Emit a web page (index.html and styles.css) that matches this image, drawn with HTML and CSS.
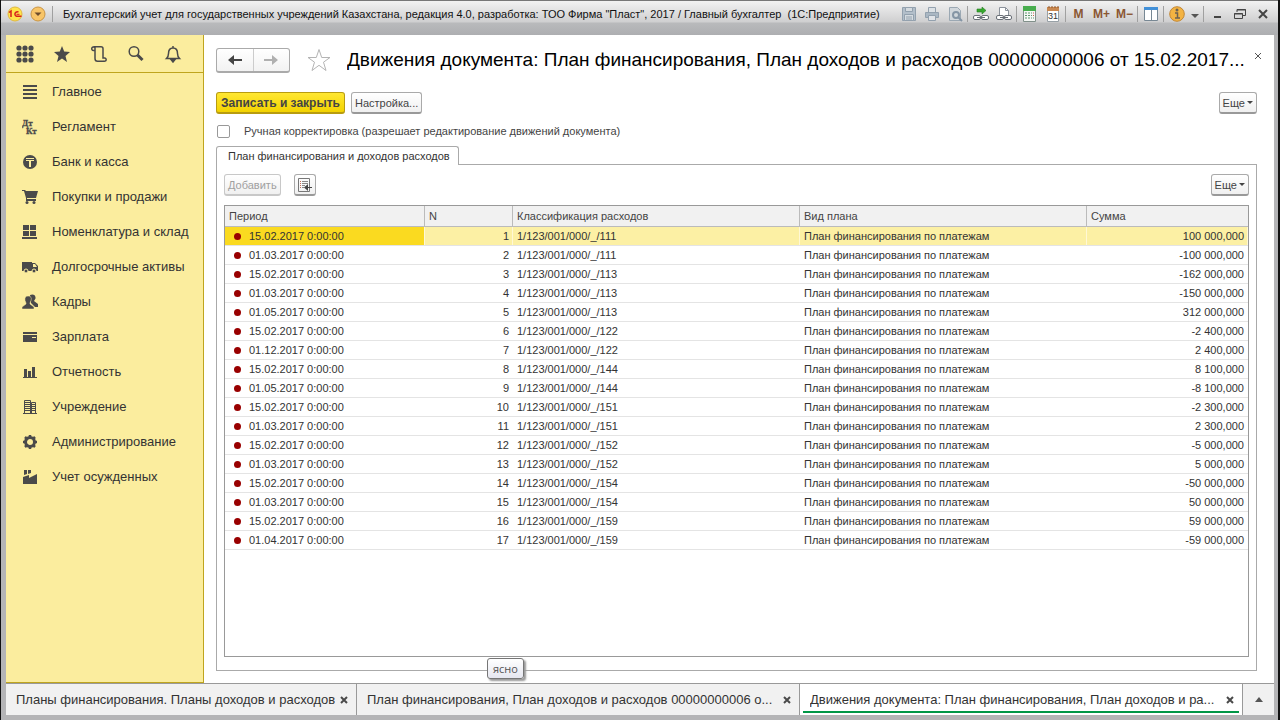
FILE: index.html
```html
<!DOCTYPE html>
<html lang="ru">

<head>
    <meta charset="UTF-8">
    <meta name="viewport" content="width=device-width, initial-scale=1.0">
    <title>Движения документа</title>
    <link rel="stylesheet" href="styles.css">
</head>

<body>
    <header class="titlebar">
        <svg class="logo" width="16" height="16" viewBox="0 0 16 16">
            <circle cx="8" cy="8" r="7" fill="#ffe34a" stroke="#e0b840"/>
            <path d="M2 6.500l2-1.500v6M11.500 6.200A2.300 2.300 0 1 0 9.500 10.300h5" fill="none" stroke="#d8201c" stroke-width="1.500"/>
            <path d="M9.500 8.300h3" stroke="#d8201c"/>
        </svg>
        <button class="menu-button" aria-label="Меню">
            <svg width="16" height="16" viewBox="0 0 16 16">
                <circle cx="8" cy="8" r="7" fill="#f8c568" stroke="#c99545"/>
                <path d="M4.500 6.500h7L8 10z" fill="#6d4c2c"/>
            </svg>
        </button>
        <span class="separator"></span>
        <h1>Бухгалтерский учет для государственных учреждений Казахстана, редакция 4.0, разработка: ТОО Фирма "Пласт", 2017 / Главный бухгалтер &nbsp;(1С:Предприятие)</h1>
        <div class="tools">
            <button disabled aria-label="Сохранить">
                <svg width="16" height="16" viewBox="0 0 16 16" fill="none" stroke="#93a1ae"><path d="M1.500 1.500h13v13h-13z" fill="#b3bfca"/><path d="M4.500 1.500h7v4h-7zM3.500 8.500h9v6h-9z" fill="#d5dbe0"/><path d="M5 11h6M5 13h6"/></svg>
            </button>
            <button disabled aria-label="Печать">
                <svg width="16" height="16" viewBox="0 0 16 16" fill="none" stroke="#93a1ae"><path d="M4.500 6V1.500h7V6" fill="#dce1e5"/><path d="M1.500 6.500h13v5h-13z" fill="#aab7c3"/><path d="M4.500 9.500h7v5h-7z" fill="#e1e4e8"/></svg>
            </button>
            <button disabled aria-label="Просмотр">
                <svg width="16" height="16" viewBox="0 0 16 16" fill="none" stroke="#9ba8b3"><path d="M2.500 1.500h8l3 3v10h-11z" fill="#d1d7dc"/><circle cx="9" cy="9" r="3" stroke="#8495a5" stroke-width="2"/><path d="M11 11l4 4" stroke="#8495a5" stroke-width="2"/></svg>
            </button>
            <span class="separator"></span>
            <button aria-label="Перейти по ссылке">
                <svg width="18" height="16" viewBox="0 0 18 16" fill="none"><path d="M5 3h5V1l4 3.500L10 8V6H5z" fill="#36a72e" stroke="#268021" stroke-width=".6"/><rect x="1.500" y="9.500" width="7" height="4" rx="1.500" fill="#fff" stroke="#686e76"/><rect x="9.500" y="9.500" width="7" height="4" rx="1.500" fill="#fff" stroke="#686e76"/><path d="M5 11.500h8" stroke="#686e76"/></svg>
            </button>
            <button aria-label="Получить ссылку">
                <svg width="18" height="16" viewBox="0 0 18 16" fill="none"><path d="M4.500 9V1.500h6l3 3V9" fill="#fff" stroke="#8c939c"/><path d="M10.500 1.500v3h3" stroke="#8c939c"/><rect x="1.500" y="9.500" width="7" height="4" rx="1.500" fill="#fff" stroke="#686e76"/><rect x="9.500" y="9.500" width="7" height="4" rx="1.500" fill="#fff" stroke="#686e76"/><path d="M5 11.500h8" stroke="#686e76"/></svg>
            </button>
            <span class="separator"></span>
            <button aria-label="Калькулятор">
                <svg width="16" height="16" viewBox="0 0 16 16"><path d="M1.500.500h12v15h-12z" fill="#f5f8f5" stroke="#81908a"/><path d="M1 0h13v5H1z" fill="#48ad4e"/><path d="M3 7h7M3 9.500h7M3 12h7" stroke="#5f9670" stroke-dasharray="2 1"/><path d="M11 7h1M11 9.500h1" stroke="#d45d4d"/><path d="M11 12h1" stroke="#5f9670"/></svg>
            </button>
            <button aria-label="Календарь">
                <svg width="16" height="16" viewBox="0 0 16 16"><path d="M2.500 2.500h11v13h-11z" fill="#fff" stroke="#98a1a7"/><path d="M2 1h12v4H2z" fill="#c98850"/><path d="M4 0v2M7 0v2M10 0v2M13 0v2" stroke="#8e562a"/><text x="8" y="13" text-anchor="middle" font-family="Liberation Sans" font-size="9" fill="#333">31</text></svg>
            </button>
            <span class="separator"></span>
            <button class="memory">M</button>
            <button class="memory">M+</button>
            <button class="memory">M−</button>
            <span class="separator"></span>
            <button aria-label="Панели">
                <svg width="16" height="16" viewBox="0 0 16 16"><path d="M1.500 1.500h13v13h-13z" fill="#fff" stroke="#788894"/><path d="M1 1h14v3H1z" fill="#4290d8"/><path d="M8.500 4v10" stroke="#788894"/></svg>
            </button>
            <span class="separator"></span>
            <button aria-label="Справка">
                <svg width="16" height="16" viewBox="0 0 16 16"><circle cx="8" cy="8" r="7.300" fill="#f3b342" stroke="#c28735"/><circle cx="8" cy="4" r="1.500" fill="#6d6251"/><path d="M6 7h2.500v5M6 12h5" stroke="#6d6251" stroke-width="1.500" fill="none"/></svg>
            </button>
            <button class="narrow" aria-label="Еще">
                <svg width="8" height="8" viewBox="0 0 8 8"><path d="M0 4h8L4 8z" fill="#555"/></svg>
            </button>
            <span class="separator"></span>
            <button aria-label="Свернуть">
                <svg width="14" height="14" viewBox="0 0 14 14"><path d="M4 10h7" stroke="#444" stroke-width="2"/></svg>
            </button>
            <button aria-label="Развернуть">
                <svg width="14" height="14" viewBox="0 0 14 14" fill="none" stroke="#444"><path d="M4 5V2.500h8.500v6H10M4 3h9M1.500 6.500h8v5h-8zM1 7h9"/></svg>
            </button>
            <button aria-label="Закрыть">
                <svg width="14" height="14" viewBox="0 0 14 14"><path d="M3 3l8 8M11 3l-8 8" stroke="#444" stroke-width="2"/></svg>
            </button>
        </div>
    </header>

    <div class="workspace">
        <aside class="sidebar">
            <div class="quick">
                <button aria-label="Все функции">
                    <svg width="18" height="18" viewBox="0 0 18 18" fill="#4a4a4a"><circle cx="3" cy="3" r="2.600"/><circle cx="9" cy="3" r="2.600"/><circle cx="15" cy="3" r="2.600"/><circle cx="3" cy="9" r="2.600"/><circle cx="9" cy="9" r="2.600"/><circle cx="15" cy="9" r="2.600"/><circle cx="3" cy="15" r="2.600"/><circle cx="9" cy="15" r="2.600"/><circle cx="15" cy="15" r="2.600"/></svg>
                </button>
                <button aria-label="Избранное">
                    <svg width="18" height="18" viewBox="0 0 18 18"><path d="M9 1l2.200 5.500 5.800.500-4.500 4 1.500 6L9 13.500 4 17l1.500-6L1 7l5.800-.500z" fill="#4a4a4a"/></svg>
                </button>
                <button aria-label="История">
                    <svg width="18" height="18" viewBox="0 0 18 18" fill="none" stroke="#4a4a4a" stroke-width="1.500"><path d="M5 5.500H3.500a1.800 1.800 0 1 1 1.500-2.800v10.800c0 2 1 2.800 2.500 2.800h7M3.500 1.700H11c1.500 0 2 .800 2 2V13h1.500a1.600 1.600 0 1 1-1 2.800"/></svg>
                </button>
                <button aria-label="Поиск">
                    <svg width="18" height="18" viewBox="0 0 18 18" fill="none" stroke="#4a4a4a"><circle cx="7" cy="6.500" r="4.800" stroke-width="1.500"/><path d="M10.500 10l5 5" stroke-width="3"/></svg>
                </button>
                <button aria-label="Оповещения">
                    <svg width="18" height="18" viewBox="0 0 18 18" fill="none" stroke="#4a4a4a" stroke-width="1.500"><path d="M2.500 13.500c1.500-1.500 2-2.500 2-5C4.500 5 6 3 9 3s4.500 2 4.500 5.500c0 2.500.500 3.500 2 5zM9 3V1"/><path d="M7 14.500h4L9 17z" fill="#4a4a4a"/></svg>
                </button>
            </div>
            <nav class="sections">
                <a href="#"><svg width="16" height="16" viewBox="0 0 16 16"><path d="M1 2h14M1 6h14M1 10h14M1 14h14" stroke="#4a4a4a" stroke-width="2"/></svg>Главное</a>
                <a href="#"><svg width="16" height="16" viewBox="0 0 16 16" fill="#4a4a4a" stroke="#4a4a4a" stroke-width=".3" font-family="Liberation Serif" font-weight="bold" font-size="9"><text x="0" y="7">Дт</text><text x="4" y="15">Кт</text></svg>Регламент</a>
                <a href="#"><svg width="16" height="16" viewBox="0 0 16 16"><circle cx="8" cy="8" r="7" fill="#4a4a4a"/><path d="M4 4.500h8M4 6.500h8" stroke="#fbed9e"/><path d="M8 6v7" stroke="#fbed9e" stroke-width="2"/></svg>Банк и касса</a>
                <a href="#"><svg width="16" height="16" viewBox="0 0 16 16" fill="#4a4a4a"><path d="M0 1h3l1 1h12l-2 7H5v1h9v2H4V9L2 2H0z"/><circle cx="5" cy="13.500" r="1.500"/><circle cx="12" cy="13.500" r="1.500"/></svg>Покупки и продажи</a>
                <a href="#"><svg width="16" height="16" viewBox="0 0 16 16" fill="#4a4a4a"><path d="M1 1h6v5H1zM8 1h6v5H8zM1 7h6v5H1zM8 7h6v5H8zM0 13h15v2H0z"/></svg>Номенклатура и склад</a>
                <a href="#"><svg width="16" height="16" viewBox="0 0 16 16" fill="#4a4a4a"><path d="M0 3h10v9H0zM10 4h3l3 3v5h-6z"/><path d="M11 5h2l2 3h-4z" fill="#fbed9e"/><g stroke="#fbed9e"><circle cx="4" cy="12" r="2"/><circle cx="12" cy="12" r="2"/></g></svg>Долгосрочные активы</a>
                <a href="#"><svg width="16" height="16" viewBox="0 0 16 16" fill="#4a4a4a"><path d="M8 1c3-1.500 6 0 5.500 3.500L12 7l4 3v3h-3L9 9z"/><path d="M6 2c3 0 4 2 3 4.500L8 9v1l4 3v2H0v-2l4-3V9L3 6.500C2.500 4 3.500 2 6 2z" stroke="#fbed9e" stroke-width=".5"/></svg>Кадры</a>
                <a href="#"><svg width="16" height="16" viewBox="0 0 16 16" fill="#4a4a4a"><path d="M1 3h14v2H1zM1 6h14v7H1z"/><path d="M10 8h4v1h-4z" fill="#fbed9e"/></svg>Зарплата</a>
                <a href="#"><svg width="16" height="16" viewBox="0 0 16 16" fill="#4a4a4a"><path d="M1 13h14v1H1zM2 5h3v8H2zM6 7h3v6H6zM10 3h3v10h-3z"/></svg>Отчетность</a>
                <a href="#"><svg width="16" height="16" viewBox="0 0 16 16" fill="none" stroke="#4a4a4a"><path d="M2.500 14V1.500h6V14M9.500 14V3.500h4V14M1 14.500h14M3 3.500h5M3 5.500h5M3 7.500h5M3 9.500h5M3 11.500h5M10 5.500h4M10 7.500h4M10 9.500h4M10 11.500h4"/></svg>Учреждение</a>
                <a href="#"><svg width="16" height="16" viewBox="0 0 16 16" fill="none" stroke="#4a4a4a"><circle cx="8" cy="8" r="4.500" stroke-width="3"/><path d="M8 1v2M8 13v2M1 8h2M13 8h2M3 3l1.500 1.500M11.500 11.500L13 13M3 13l1.500-1.500M11.500 4.500L13 3" stroke-width="2.500"/></svg>Администрирование</a>
                <a href="#"><svg width="16" height="16" viewBox="0 0 16 16" fill="#4a4a4a"><path d="M1 15V8l6-2v3l8-4v10zM2 1h3v4L2 6zM6 1h3v3L6 5z"/></svg>Учет осужденных</a>
            </nav>
        </aside>

        <main class="page">
            <div class="page-head">
                <div class="history">
                    <button aria-label="Назад"><svg width="16" height="12" viewBox="0 0 16 12"><path d="M1 6l6-5v4h8v2H7v4z" fill="#444"/></svg></button>
                    <button aria-label="Вперед"><svg width="16" height="12" viewBox="0 0 16 12"><path d="M15 6L9 1v4H1v2h8v4z" fill="#b0b0b0"/></svg></button>
                </div>
                <button class="favorite" aria-label="В избранное">
                    <svg width="24" height="24" viewBox="0 0 24 24"><path d="M12 1.500l2.700 8H23l-6.500 4.700L19 22.500 12 17.300 5 22.500l2.500-8.300L1 9.500h8.300z" fill="none" stroke="#b4b4b4"/></svg>
                </button>
                <h2>Движения документа: План финансирования, План доходов и расходов 00000000006 от 15.02.2017...</h2>
                <button class="close-page" aria-label="Закрыть"><svg width="8" height="8" viewBox="0 0 8 8"><path d="M1 1l6 6M7 1L1 7" stroke="#555"/></svg></button>
            </div>

            <div class="toolbar">
                <button class="btn primary">Записать и закрыть</button>
                <button class="btn">Настройка...</button>
                <button class="btn more">Еще<span class="caret"></span></button>
            </div>

            <label class="manual"><input type="checkbox">Ручная корректировка (разрешает редактирование движений документа)</label>

            <button class="tab">План финансирования и доходов расходов</button>
            <section class="panel">
                <div class="panel-bar">
                    <button class="btn" disabled>Добавить</button>
                    <button class="btn icon" aria-label="Подбор">
                        <svg width="16" height="16" viewBox="0 0 16 16" fill="none"><path d="M1.500 1.500h11v13h-11z" stroke="#777"/><path d="M3 4.500h1M3 6.500h1M3 8.500h1M3 10.500h1" stroke="#c66a52"/><path d="M5 4.500h6M5 6.500h6M5 8.500h3M5 10.500h2" stroke="#888"/><path d="M15 10.500H8" stroke="#444"/><path d="M11 7v7l-4-3.500z" fill="#444"/></svg>
                    </button>
                    <button class="btn more">Еще<span class="caret"></span></button>
                </div>
                <div class="grid">
                    <table>
                        <colgroup>
                            <col class="col-period">
                            <col class="col-number">
                            <col class="col-class">
                            <col class="col-kind">
                            <col class="col-sum">
                        </colgroup>
                        <thead>
                            <tr><th>Период</th><th>N</th><th>Классификация расходов</th><th>Вид плана</th><th>Сумма</th></tr>
                        </thead>
                        <tbody>
                            <tr class="selected"><td>15.02.2017 0:00:00</td><td>1</td><td>1/123/001/000/_/111</td><td>План финансирования по платежам</td><td>100 000,000</td></tr>
                            <tr><td>01.03.2017 0:00:00</td><td>2</td><td>1/123/001/000/_/111</td><td>План финансирования по платежам</td><td>-100 000,000</td></tr>
                            <tr><td>15.02.2017 0:00:00</td><td>3</td><td>1/123/001/000/_/113</td><td>План финансирования по платежам</td><td>-162 000,000</td></tr>
                            <tr><td>01.03.2017 0:00:00</td><td>4</td><td>1/123/001/000/_/113</td><td>План финансирования по платежам</td><td>-150 000,000</td></tr>
                            <tr><td>01.05.2017 0:00:00</td><td>5</td><td>1/123/001/000/_/113</td><td>План финансирования по платежам</td><td>312 000,000</td></tr>
                            <tr><td>15.02.2017 0:00:00</td><td>6</td><td>1/123/001/000/_/122</td><td>План финансирования по платежам</td><td>-2 400,000</td></tr>
                            <tr><td>01.12.2017 0:00:00</td><td>7</td><td>1/123/001/000/_/122</td><td>План финансирования по платежам</td><td>2 400,000</td></tr>
                            <tr><td>15.02.2017 0:00:00</td><td>8</td><td>1/123/001/000/_/144</td><td>План финансирования по платежам</td><td>8 100,000</td></tr>
                            <tr><td>01.05.2017 0:00:00</td><td>9</td><td>1/123/001/000/_/144</td><td>План финансирования по платежам</td><td>-8 100,000</td></tr>
                            <tr><td>15.02.2017 0:00:00</td><td>10</td><td>1/123/001/000/_/151</td><td>План финансирования по платежам</td><td>-2 300,000</td></tr>
                            <tr><td>01.03.2017 0:00:00</td><td>11</td><td>1/123/001/000/_/151</td><td>План финансирования по платежам</td><td>2 300,000</td></tr>
                            <tr><td>15.02.2017 0:00:00</td><td>12</td><td>1/123/001/000/_/152</td><td>План финансирования по платежам</td><td>-5 000,000</td></tr>
                            <tr><td>01.03.2017 0:00:00</td><td>13</td><td>1/123/001/000/_/152</td><td>План финансирования по платежам</td><td>5 000,000</td></tr>
                            <tr><td>15.02.2017 0:00:00</td><td>14</td><td>1/123/001/000/_/154</td><td>План финансирования по платежам</td><td>-50 000,000</td></tr>
                            <tr><td>01.03.2017 0:00:00</td><td>15</td><td>1/123/001/000/_/154</td><td>План финансирования по платежам</td><td>50 000,000</td></tr>
                            <tr><td>15.02.2017 0:00:00</td><td>16</td><td>1/123/001/000/_/159</td><td>План финансирования по платежам</td><td>59 000,000</td></tr>
                            <tr><td>01.04.2017 0:00:00</td><td>17</td><td>1/123/001/000/_/159</td><td>План финансирования по платежам</td><td>-59 000,000</td></tr>
                        </tbody>
                    </table>
                </div>
            </section>
        </main>
    </div>

    <footer class="windows">
        <div class="window first"><a href="#">Планы финансирования. Планы доходов и расходов</a><button aria-label="Закрыть"><svg width="8" height="8" viewBox="0 0 8 8"><path d="M1 1l6 6M7 1L1 7" stroke="#4a4a4a" stroke-width="2"/></svg></button></div>
        <div class="window"><a href="#">План финансирования, План доходов и расходов 00000000006 о...</a><button aria-label="Закрыть"><svg width="8" height="8" viewBox="0 0 8 8"><path d="M1 1l6 6M7 1L1 7" stroke="#4a4a4a" stroke-width="2"/></svg></button></div>
        <div class="window current"><a href="#">Движения документа: План финансирования, План доходов и ра...</a><button aria-label="Закрыть"><svg width="8" height="8" viewBox="0 0 8 8"><path d="M1 1l6 6M7 1L1 7" stroke="#4a4a4a" stroke-width="2"/></svg></button></div>
        <button class="window-list" aria-label="Список окон"><svg width="10" height="6" viewBox="0 0 10 6"><path d="M1 5h8L5 0z" fill="#555"/></svg></button>
        <div class="tooltip">ясно</div>
    </footer>
</body>

</html>
```
FILE: styles.css
```css
* {
    box-sizing: border-box;
}

body {
    display: flex;
    flex-direction: column;
    min-height: 100vh;
    margin: 0;
    border-left: 1px solid #111;
    border-right: 2px solid #111;
    background-color: #b4b4b6;
    color: #333;
    font-family: "Liberation Sans", Arial, sans-serif;
    font-size: 11px;
}

button {
    padding: 0;
    border: none;
    background: none;
    color: inherit;
    font: inherit;
    white-space: nowrap;
}

a {
    color: inherit;
    text-decoration: none;
}

svg {
    display: block;
    flex: none;
}

/* title bar */
.titlebar {
    display: flex;
    align-items: center;
    height: 35px;
    padding: 0 5px 9px 6px;
    border-top: 1px solid #777;
    background: linear-gradient(#f2f2f2, #cfcfd0 21px, #b9babc 22px, #adaeb1);
}

.menu-button {
    margin-left: 7px;
}

.separator {
    flex: none;
    width: 1px;
    height: 16px;
    background-color: #a0a0a0;
}

.titlebar > .separator {
    margin-left: 6px;
}

h1 {
    flex: 1;
    min-width: 0;
    margin: 0 0 0 10px;
    overflow: hidden;
    color: #111;
    font-size: 11px;
    font-weight: normal;
    white-space: nowrap;
}

.tools {
    display: flex;
    align-items: center;
    gap: 2px;
}

.tools button {
    display: flex;
    justify-content: center;
    width: 21px;
}

.tools .narrow {
    width: 12px;
}

.tools .memory {
    color: #8a5632;
    font-size: 12px;
    font-weight: bold;
}

/* sections panel */
.workspace {
    display: flex;
    flex: 1;
    margin: 0 4px 0 5px;
    background-color: #fff;
}

.sidebar {
    flex: none;
    width: 198px;
    border-right: 1px solid #bfa51e;
    border-bottom: 1px solid #bfa51e;
    background-color: #fbed9e;
}

.quick {
    display: flex;
    gap: 19px;
    height: 38px;
    padding: 0 10px;
    border-bottom: 1px solid #bfa51e;
}

.sections {
    padding-top: 1px;
}

.sections a {
    display: flex;
    align-items: center;
    gap: 14px;
    height: 35px;
    padding-left: 16px;
    font-size: 13px;
}

/* page */
.page {
    display: flex;
    flex: 1;
    flex-direction: column;
    min-width: 0;
    padding: 12px 17px 12px 12px;
}

.page-head {
    display: flex;
    align-items: center;
    height: 26px;
    margin-right: -5px;
}

.history {
    display: flex;
    flex: none;
    width: 74px;
    height: 25px;
    border: 1px solid #aaa;
    border-bottom: 2px solid #aaa;
    border-radius: 3px;
    background: linear-gradient(#fff, #f2f2f2);
}

.history button {
    display: flex;
    flex: 1;
    align-items: center;
    justify-content: center;
}

.history button + button {
    border-left: 1px solid #ccc;
}

.favorite {
    margin-left: 17px;
}

h2 {
    flex: 1;
    min-width: 0;
    margin: 0 0 0 16px;
    overflow: hidden;
    color: #000;
    font-size: 19px;
    font-weight: normal;
    line-height: 26px;
    white-space: nowrap;
}

.close-page {
    align-self: flex-start;
    margin-top: 5px;
}

.toolbar,
.panel-bar {
    display: flex;
    gap: 6px;
}

.toolbar {
    margin-top: 19px;
}

.btn {
    height: 22px;
    padding: 0 3px;
    border: 1px solid #aaa;
    border-bottom: 2px solid #999;
    border-radius: 3px;
    background: linear-gradient(#fff, #f0f0f0);
    color: #444;
}

.btn:disabled {
    border-color: #c8c8c8;
    color: #a0a0a0;
}

.primary {
    padding: 0 4px;
    border-color: #b89c10;
    background: linear-gradient(#ffe733, #f3d300);
    font-size: 12px;
    font-weight: bold;
}

.more {
    display: flex;
    align-items: center;
    gap: 2px;
    margin-left: auto;
}

.caret {
    border: 3px solid transparent;
    border-top-color: #444;
    border-bottom: none;
}

.manual {
    display: flex;
    align-items: center;
    gap: 14px;
    height: 14px;
    margin: 10px 0 8px 1px;
    color: #444;
}

.manual input {
    width: 13px;
    height: 13px;
    margin: 0;
    border: 1px solid #999;
    border-radius: 2px;
    background-color: #fff;
    appearance: none;
}

.tab {
    z-index: 1;
    align-self: flex-start;
    height: 19px;
    margin-bottom: -1px;
    padding: 0 8px 0 11px;
    border: 1px solid #aaa;
    border-bottom: none;
    border-radius: 3px 3px 0 0;
    background-color: #fff;
}

.panel {
    display: flex;
    flex: 1;
    flex-direction: column;
    padding: 9px 7px 13px 7px;
    border: 1px solid #aaa;
}

.panel-bar .icon {
    margin-left: 7px;
    padding: 0 2px;
}

.grid {
    flex: 1;
    margin-top: 9px;
    border: 1px solid #999;
}

table {
    width: 100%;
    border-collapse: separate;
    border-spacing: 0;
    table-layout: fixed;
}

.col-period {
    width: 200px;
}

.col-number {
    width: 88px;
}

.col-sum {
    width: 161px;
}

th {
    height: 21px;
    padding: 0 4px;
    border-right: 1px solid #bbb;
    border-bottom: 1px solid #bbb;
    background-color: #f1f1f1;
    color: #444;
    font-weight: normal;
    text-align: left;
}

th:last-child {
    border-right: none;
}

td {
    height: 19px;
    padding: 0 4px;
    border-bottom: 1px solid #e4e4e4;
    white-space: nowrap;
}

td:first-child::before {
    display: inline-block;
    width: 7px;
    height: 7px;
    margin: 0 8px 0 5px;
    border-radius: 50%;
    background-color: #990000;
    content: "";
}

td:nth-child(2),
td:last-child {
    text-align: right;
}

.selected td {
    background-color: #fcf0a4;
    box-shadow: inset -1px 0 #fff8d5;
}

.selected td:first-child {
    background-color: #fada20;
}

/* open windows */
.windows {
    position: relative;
    display: flex;
    height: 37px;
    margin: 0 4px 0 5px;
    border-top: 1px solid #999;
    border-bottom: 5px solid #b4b4b6;
}

.window {
    display: flex;
    flex: 1;
    align-items: center;
    justify-content: space-between;
    min-width: 0;
    padding: 0 8px 0 10px;
    border-right: 1px solid #999;
    background-color: #f1f1f1;
    font-size: 13px;
}

.first {
    flex: 0 1 351px;
}

.window a {
    overflow: hidden;
    text-overflow: ellipsis;
    white-space: nowrap;
}

.window button {
    margin-left: 3px;
}

.current {
    background: linear-gradient(#009646, #009646) 3px 27px / calc(100% - 6px) 2px no-repeat #fff;
}

.window-list {
    display: flex;
    align-items: center;
    justify-content: center;
    width: 31px;
    background-color: #f1f1f1;
}

.tooltip {
    position: absolute;
    bottom: 36px;
    left: 481px;
    padding: 1px 5px;
    border: 1px solid #767676;
    border-radius: 3px;
    background: linear-gradient(#fff, #e6e7f0);
    box-shadow: 2px 2px 2px #999;
    color: #555;
    font-family: "Open Sans", sans-serif;
    font-size: 11px;
    line-height: 17px;
}
```
